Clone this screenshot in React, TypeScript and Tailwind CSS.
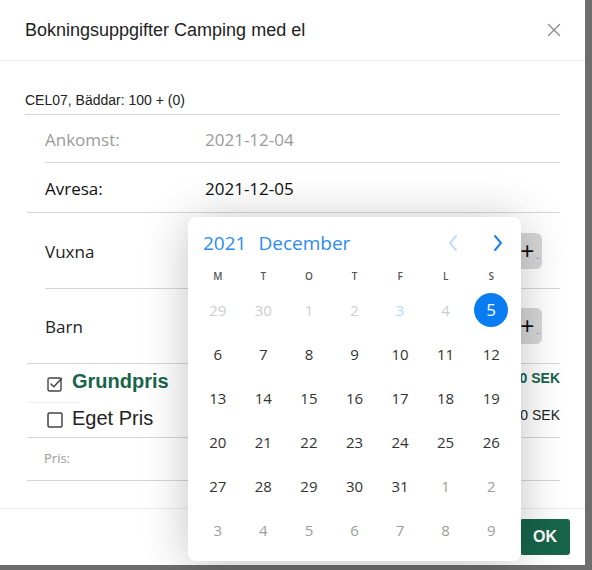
import React from 'react';
import { X } from 'lucide-react';

type Day = { n: number; tone: 'prev' | 'today' | 'cur' | 'next' | 'sel' };

const weekdays = ['M', 'T', 'O', 'T', 'F', 'L', 'S'];

const buildDays = (): Day[] => {
  const days: Day[] = [
    { n: 29, tone: 'prev' },
    { n: 30, tone: 'prev' },
    { n: 1, tone: 'prev' },
    { n: 2, tone: 'prev' },
    { n: 3, tone: 'today' },
    { n: 4, tone: 'prev' },
    { n: 5, tone: 'sel' },
  ];
  for (let i = 6; i <= 31; i++) days.push({ n: i, tone: 'cur' });
  for (let i = 1; i <= 9; i++) days.push({ n: i, tone: 'next' });
  return days;
};

const toneClass: Record<Day['tone'], string> = {
  prev: 'text-[#cdcdcd]',
  today: 'text-[#b6d5fb]',
  cur: 'text-[#333333]',
  next: 'text-[#9d9d9d]',
  sel: 'text-white',
};

const CheckedBox = () => (
  <svg width="17" height="17" viewBox="0 0 17 17" fill="none">
    <rect x="1" y="3" width="13" height="13" rx="1.5" stroke="#444" strokeWidth="1.4" />
    <path d="M4 9l2.8 2.8L14.5 3.5" stroke="#444" strokeWidth="1.5" strokeLinecap="round" strokeLinejoin="round" />
  </svg>
);

const EmptyBox = () => (
  <svg width="16" height="16" viewBox="0 0 16 16" fill="none">
    <rect x="1" y="1" width="14" height="14" rx="1.5" stroke="#444" strokeWidth="1.5" />
  </svg>
);

const PlusButton = () => (
  <div className="mr-[18px] flex h-[36px] w-[62px] items-center justify-end rounded-md bg-[#d7d7d7] pr-[3px] font-['Liberation_Sans',sans-serif] text-[#111]">
    <span className="text-[24px] leading-none">+</span>
    <span className="ml-[2px] mt-[10px] text-[10px] leading-none text-[#4a6fd0]">.</span>
  </div>
);

const DatePicker = () => {
  const days = buildDays();
  return (
    <div className="absolute left-[188px] top-[217px] h-[344px] w-[333px] rounded-lg bg-white font-['Open_Sans',sans-serif] shadow-[0_4px_48px_rgba(0,0,0,0.24)]">
      <div className="flex h-[52px] items-center pl-[15px] pr-[17px]">
        <span className="text-[19px] text-[#2b8cf2]">2021</span>
        <span className="ml-[12px] text-[19px] text-[#2b8cf2]">December</span>
        <div className="ml-auto flex items-center gap-[33px]">
          <svg width="12" height="18" viewBox="0 0 12 18" fill="none">
            <path d="M9 2L3 9l6 7" stroke="#c4dcfb" strokeWidth="2" strokeLinecap="round" strokeLinejoin="round" />
          </svg>
          <svg width="12" height="18" viewBox="0 0 12 18" fill="none">
            <path d="M3 2l6 7-6 7" stroke="#1e7fe8" strokeWidth="2" strokeLinecap="round" strokeLinejoin="round" />
          </svg>
        </div>
      </div>
      <div className="grid h-[14px] grid-cols-7 px-[7px]">
        {weekdays.map((w, i) => (
          <div key={i} className="flex items-center justify-center text-[10px] font-semibold text-[#555]">
            {w}
          </div>
        ))}
      </div>
      <div className="mt-[5px] grid grid-cols-7 px-[7px]">
        {days.map((d, i) => (
          <div key={i} className="flex h-[44px] items-center justify-center">
            {d.tone === 'sel' ? (
              <span className="flex h-[34px] w-[34px] items-center justify-center rounded-full bg-[#0a7cf2] text-[17px] text-white">
                {d.n}
              </span>
            ) : (
              <span className={`text-[15px] ${toneClass[d.tone]}`}>{d.n}</span>
            )}
          </div>
        ))}
      </div>
    </div>
  );
};

const App: React.FC = () => {
  return (
    <div className="h-[570px] w-[592px] overflow-hidden bg-[#6d6d6d]">
      <div className="relative flex h-[565px] w-[585px] flex-col bg-white">
        {/* Header */}
        <div className="flex h-[61px] items-center justify-between border-b border-[#ececec] pl-[25px] pr-[20px]">
          <h1 className="font-['Liberation_Sans',sans-serif] text-[18px] text-[#222]">
            Bokningsuppgifter Camping med el
          </h1>
          <X className="h-[22px] w-[22px] text-[#8a8a8a]" strokeWidth={1.4} />
        </div>

        {/* Body */}
        <div className="flex flex-1 flex-col px-[25px] font-['Open_Sans',sans-serif]">
          <div className="flex h-[54px] items-end border-b border-[#d6d6d6] pb-[3px] font-['Liberation_Sans',sans-serif] text-[14px] text-[#222]">
            CEL07, Bäddar: 100 + (0)
          </div>

          <div className="ml-5 flex h-[48px] items-center border-b border-[#d6d6d6] pt-[3px] text-[17px] text-[#9a9a9a]">
            <span className="w-[160px]">Ankomst:</span>
            <span>2021-12-04</span>
          </div>

          <div className="ml-[2px] flex h-[50px] items-center border-b border-[#d6d6d6] pl-[18px] pt-[3px] text-[17px] text-[#111]">
            <span className="w-[160px]">Avresa:</span>
            <span>2021-12-05</span>
          </div>

          <div className="ml-5 flex h-[76px] items-center justify-between border-b border-[#d6d6d6] text-[17px] text-[#222]">
            <span className="pt-[2px]">Vuxna</span>
            <PlusButton />
          </div>

          <div className="ml-[2px] flex h-[75px] items-center justify-between border-b border-[#d6d6d6] pl-[18px] text-[17px] text-[#222]">
            <span className="pt-[2px]">Barn</span>
            <PlusButton />
          </div>

          <div className="flex h-[38px] items-center justify-between pl-[22px] font-['Liberation_Sans',sans-serif]">
            <div className="flex items-center gap-[8px]">
              <CheckedBox />
              <span className="-mt-[4px] text-[20px] font-bold text-[#17654a]">Grundpris</span>
            </div>
            <span className="-mt-[10px] text-[14px] font-bold text-[#17654a]">0 SEK</span>
          </div>
          <div className="ml-[2px] w-[53px] border-b border-[#f0f0f0]" />

          <div className="ml-[2px] flex h-[35px] items-center justify-between border-b border-[#d6d6d6] pl-[20px] font-['Liberation_Sans',sans-serif]">
            <div className="flex items-center gap-[9px]">
              <EmptyBox />
              <span className="-mt-[5px] text-[20px] text-[#222]">Eget Pris</span>
            </div>
            <span className="-mt-[9px] text-[14px] text-[#222]">0 SEK</span>
          </div>

          <div className="ml-[2px] flex h-[43px] items-center border-b border-[#d6d6d6] pl-[17px] text-[13px] text-[#9a9a9a]">
            Pris:
          </div>
        </div>

        {/* Footer */}
        <div className="flex h-[57px] items-center justify-end border-t border-[#ececec] pr-[15px]">
          <button className="h-[36px] w-[50px] rounded-[3px] bg-[#17654a] font-['Liberation_Sans',sans-serif] text-[16px] font-bold text-white">
            OK
          </button>
        </div>

        <DatePicker />
      </div>
    </div>
  );
};

export default App;
